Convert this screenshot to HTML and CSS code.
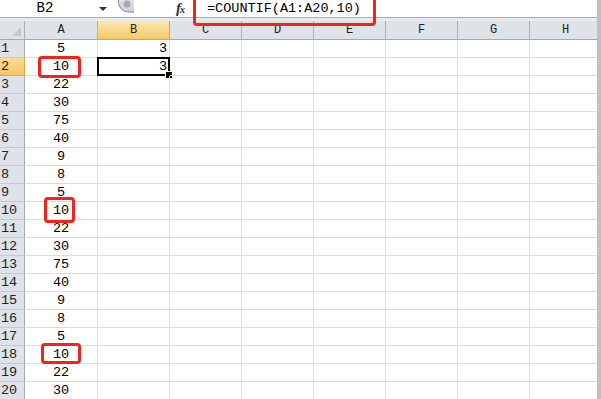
FILE: index.html
```html
<!DOCTYPE html>
<html>
<head>
  <meta charset="UTF-8">
  <title>COUNTIF</title>
  <link rel="stylesheet" href="styles.css">
</head>
<body>

  <div class="app">
    <div class="main">
      <div class="fbar">
        <div class="namebox">B2</div>
        <div class="dd"><span class="arrow"></span></div>
        <svg class="grip" width="18" height="17" viewBox="0 0 18 17">
          <defs>
            <linearGradient id="gg" x1="0" y1="0" x2="0" y2="1">
              <stop offset="0" stop-color="#eef0f2"/>
              <stop offset="1" stop-color="#cdd1d6"/>
            </linearGradient>
          </defs>
          <rect x="2.5" y="-9" width="30" height="21" rx="10" fill="url(#gg)" stroke="#868c93"/>
          <circle cx="11" cy="4" r="3.5" fill="#a6abb1"/>
        </svg>
        <div class="fx"><i>f</i><sub>x</sub></div>
        <div class="formula">=COUNTIF(A1:A20,10)</div>
        <span class="fmark"></span>
      </div>
      <div class="gap"></div>

      <div class="sheet" id="sheet">
        <div class="ch corner"></div>
        <div class="ch">A</div>
        <div class="ch sel">B</div>
        <div class="ch">C</div>
        <div class="ch">D</div>
        <div class="ch">E</div>
        <div class="ch">F</div>
        <div class="ch">G</div>
        <div class="ch">H</div>
      </div>
    </div>
    <div class="vbar"></div>
  </div>

  <script>
    var colA = [5, 10, 22, 30, 75, 40, 9, 8, 5, 10, 22, 30, 75, 40, 9, 8, 5, 10, 22, 30];
    var colB = { 1: 3, 2: 3 };
    var marks = { 2: "m2", 10: "m10", 18: "m18" };
    var sheet = document.getElementById("sheet");

    for (var i = 1; i <= colA.length; i++) {
      var rh = document.createElement("div");
      rh.className = i == 2 ? "rh sel" : "rh";
      rh.textContent = i;
      sheet.appendChild(rh);

      var a = document.createElement("div");
      a.className = "cell ca";
      a.textContent = colA[i - 1];
      if (marks[i]) {
        var m = document.createElement("span");
        m.className = "mark " + marks[i];
        a.appendChild(m);
      }
      sheet.appendChild(a);

      var b = document.createElement("div");
      b.className = "cell cb";
      if (colB[i]) b.textContent = colB[i];
      if (i == 2) {
        var cur = document.createElement("span");
        cur.className = "cur";
        b.appendChild(cur);
      }
      sheet.appendChild(b);

      for (var j = 0; j < 6; j++) {
        var c = document.createElement("div");
        c.className = "cell";
        sheet.appendChild(c);
      }
    }
  </script>

</body>
</html>
```

FILE: styles.css
```css
* { box-sizing: border-box; }
body { margin: 0; background: #fff; font-family: "Liberation Mono", monospace; font-size: 13px; color: #000; overflow: hidden; }

.app { display: flex; height: 399px; }
.main { width: 597px; overflow: hidden; }
.vbar { flex: 1; background: #bfc1c4; }

/* formula bar */
.fbar { position: relative; display: flex; align-items: center; height: 18px; border-bottom: 1px solid #a7adb4; }
.namebox { width: 90px; text-align: center; line-height: 17px; font-size: 14px; }
.dd { width: 26px; display: flex; justify-content: center; }
.arrow { width: 0; height: 0; border-left: 4px solid transparent; border-right: 4px solid transparent; border-top: 4px solid #333; }
.grip { display: block; margin-top: -1px; }
.fx { width: 60px; height: 17px; padding-left: 42px; font-family: "Liberation Serif", serif; font-size: 15px; color: #333; font-weight: bold; line-height: 16px; white-space: nowrap; }
.fx sub { font-size: 10px; vertical-align: 0; font-style: italic; margin-left: -1px; }
.formula { padding-left: 13px; line-height: 17px; font-size: 13.5px; }
.fmark { position: absolute; left: 193px; top: -4px; width: 183px; height: 30px; border: 3px solid #f0231d; border-radius: 4px; z-index: 2; }

.gap { height: 3px; background: #e9ecef; }

/* sheet */
.sheet { display: grid; grid-template-columns: 25px 73px repeat(7, 72px); grid-template-rows: 19px; grid-auto-rows: 18px; }
.ch { background: #dfe3e8; border-right: 1px solid #a9b2bc; border-bottom: 1px solid #9eabb7; text-align: center; font-size: 12px; line-height: 18px; color: #222; }
.ch.sel { background: linear-gradient(#fae7b0, #f5ca69); border-bottom-color: #e3a43c; border-right-color: #d4a860; }
.corner { position: relative; }
.corner::after { content: ""; position: absolute; right: 3px; bottom: 3px; width: 0; height: 0; border-left: 9px solid transparent; border-bottom: 9px solid #c3c8ce; }

.rh { background: #dfe3e8; border-right: 1px solid #9eabb7; border-bottom: 1px solid #c3c9d0; padding-left: 1px; line-height: 17px; color: #222; font-size: 13.5px; }
.rh.sel { background: linear-gradient(#f8dc97, #f3c563); border-bottom-color: #e3a43c; border-right-color: #e3a43c; }

.cell { position: relative; border-right: 1px solid #dadcdd; border-bottom: 1px solid #dadcdd; line-height: 17px; font-size: 13.5px; }
.ca { text-align: center; }
.cb { text-align: right; padding-right: 2px; }

.cur { position: absolute; left: -1px; top: -1px; right: -1px; bottom: -1px; border: 2px solid #000; }
.cur::after { content: ""; position: absolute; right: -5px; bottom: -5px; width: 6px; height: 6px; background: #000; border: 1px solid #fff; }

.mark { position: absolute; border: 3px solid #f0231d; border-radius: 4px; }
.m2 { left: 13px; top: -2px; width: 43px; height: 22px; }
.m10 { left: 19px; top: -5px; width: 31px; height: 26px; }
.m18 { left: 16px; top: -3px; width: 40px; height: 21px; }
```
